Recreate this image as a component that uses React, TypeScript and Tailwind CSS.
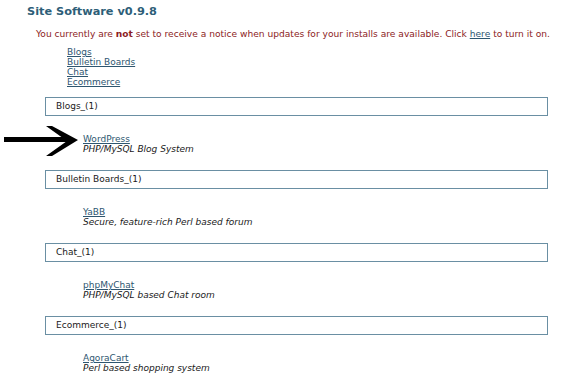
import React from 'react';

const categories = ['Blogs', 'Bulletin Boards', 'Chat', 'Ecommerce'];

const sections = [
  { name: 'Blogs', app: 'WordPress', desc: 'PHP/MySQL Blog System' },
  { name: 'Bulletin Boards', app: 'YaBB', desc: 'Secure, feature-rich Perl based forum' },
  { name: 'Chat', app: 'phpMyChat', desc: 'PHP/MySQL based Chat room' },
  { name: 'Ecommerce', app: 'AgoraCart', desc: 'Perl based shopping system' },
];

function Arrow() {
  return (
    <svg className="absolute left-[4px] top-[125px]" width="76" height="34" viewBox="0 0 76 34">
      <rect x="0" y="12" width="64" height="5" fill="#000" />
      <polygon points="42,1 48,1 74,15 48,31 42,31 63,16" fill="#000" />
    </svg>
  );
}

export default function App() {
  return (
    <div className="relative w-[563px] h-[387px] bg-white overflow-hidden font-['DejaVu_Sans',sans-serif]">
      <Arrow />
      <h1 className="ml-[27px] pt-[5px] text-[11.3px] leading-[14px] font-bold text-[#2d5e78]">
        Site Software v0.9.8
      </h1>
      <p className="ml-[36px] mt-[9px] text-[9.1px] leading-[12px] text-[#8c1c24] whitespace-nowrap">
        You currently are <b>not</b> set to receive a notice when updates for your installs are available. Click{' '}
        <a href="#" className="underline text-[#2e5670]">here</a> to turn it on.
      </p>
      <ul className="ml-[67px] mt-[7px] text-[9px] leading-[10px]">
        {categories.map((c) => (
          <li key={c}>
            <a href="#" className="underline text-[#2e5670]">{c}</a>
          </li>
        ))}
      </ul>
      <div className="mt-[10px]">
        {sections.map((s) => (
          <div key={s.name} className="mb-[16px]">
            <div className="ml-[45px] w-[503px] h-[19px] border border-[#6a8fa3] pl-[10px] flex items-center text-[9px] text-[#1a1a1a]">
              {s.name}_(1)
            </div>
            <div className="ml-[83px] mt-[18px] text-[9px] leading-[10px]">
              <a href="#" className="underline text-[#2e5670]">{s.app}</a>
              <div className="italic text-[#1a1a1a]">{s.desc}</div>
            </div>
          </div>
        ))}
      </div>
    </div>
  );
}
